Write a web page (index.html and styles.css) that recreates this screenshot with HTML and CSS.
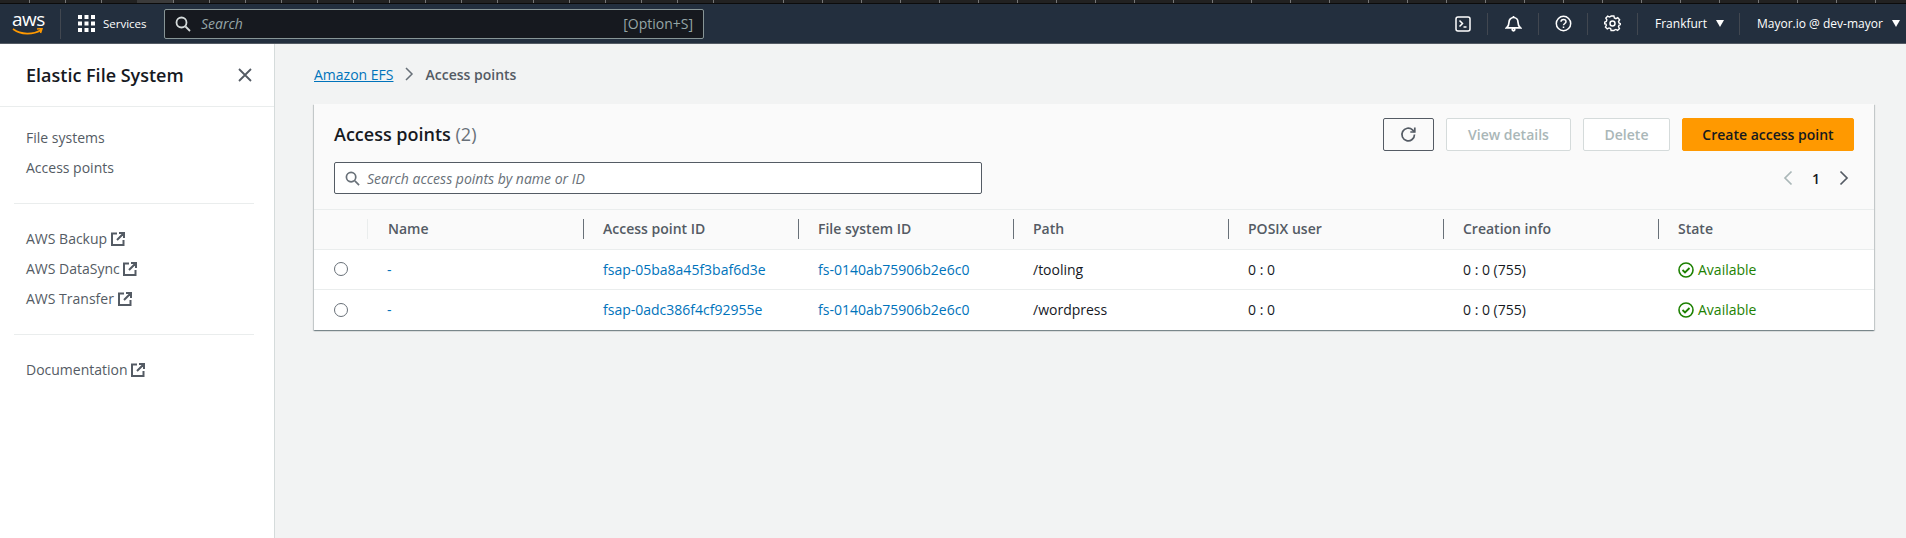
FILE: index.html
```html
<!DOCTYPE html>
<html lang="en">
<head>
    <meta charset="UTF-8">
    <meta name="viewport" content="width=device-width, initial-scale=1.0">
    <title>Access points | Amazon EFS</title>
    <link rel="stylesheet" href="styles.css">
</head>
<body>
    <div class="tabstrip">
        <span class="tabs tabs-left"></span>
        <span class="tab-active"></span>
        <span class="tabs tabs-mid"></span>
        <span class="tabs tabs-right"></span>
    </div>

    <header class="topnav">
        <div class="logo">
            <span class="logo-text">aws</span>
            <svg class="logo-smile" width="32" height="8" viewBox="0 0 32 8"><path d="M1 1c8 6 20 6 28 1M25 1l5-.5-1.500 4.500" fill="none" stroke="#f90" stroke-width="1.600"/></svg>
        </div>
        <span class="topnav-sep"></span>
        <div class="services">
            <svg width="17" height="17" viewBox="0 0 17 17" fill="#fff"><rect width="4" height="4"/><rect x="6.500" width="4" height="4"/><rect x="13" width="4" height="4"/><rect y="6.500" width="4" height="4"/><rect x="6.500" y="6.500" width="4" height="4"/><rect x="13" y="6.500" width="4" height="4"/><rect y="13" width="4" height="4"/><rect x="6.500" y="13" width="4" height="4"/><rect x="13" y="13" width="4" height="4"/></svg>
            <span>Services</span>
        </div>
        <div class="topsearch">
            <svg width="16" height="16" viewBox="0 0 16 16" fill="none" stroke="#d5dbdb" stroke-width="1.800"><circle cx="6.500" cy="6.500" r="5"/><path d="M10.500 10.500l4.500 4.500"/></svg>
            <span class="topsearch-text">Search</span>
            <span class="topsearch-key">[Option+S]</span>
        </div>
        <div class="topnav-right">
            <div class="topicon">
                <svg width="16" height="16" viewBox="0 0 16 16" fill="none" stroke="#fff" stroke-width="1.500"><rect x="1" y="1" width="14" height="14" rx="2"/><path d="M4.500 4.500L7.500 7.500 4.500 10.500M8.500 11h3"/></svg>
            </div>
            <div class="topicon topicon-bell">
                <svg width="17" height="17" viewBox="0 0 17 17" fill="none" stroke="#fff" stroke-width="1.700"><path d="M1.500 12.800c1.900-1.500 2.500-3.200 2.500-5.600 0-2.800 2-4.700 4.500-4.700s4.500 1.900 4.500 4.700c0 2.400.6 4.100 2.500 5.600z"/><path d="M8.500 1v1.500"/><circle cx="8.500" cy="14.500" r="1.300"/></svg>
            </div>
            <div class="topicon topicon-help">
                <svg width="17" height="17" viewBox="0 0 17 17" fill="none" stroke="#fff" stroke-width="1.500"><circle cx="8.500" cy="8.500" r="7.200"/><path d="M6 6.800c0-1.500 1.100-2.300 2.500-2.300S11 5.400 11 6.700c0 1.800-2.500 1.800-2.500 3.600"/><path d="M8.500 11.500v1.500"/></svg>
            </div>
            <div class="topicon">
                <svg width="17" height="17" viewBox="0 0 17 17" fill="none" stroke="#fff" stroke-width="1.500"><path d="M7 1h3l.5 2.100 1.700.8 1.900-1 2 2.300-1.200 1.700.5 1.600 1.800.9v.6l-1.800 1-.5 1.500 1 1.900-2 2-1.800-1-1.600.7L10 16.500H7l-.5-2-1.700-.7-1.800 1-2-2 1-1.900-.6-1.500L0 9.300V7.700l1.900-.8.6-1.700-1.100-1.800 2-2.200 1.800 1 1.400-.7z" transform="translate(.5 0) scale(.94)"/><circle cx="8.500" cy="8.500" r="2.500"/></svg>
            </div>
            <div class="topmenu topmenu-region">Frankfurt <span class="caret"></span></div>
            <div class="topmenu topmenu-user">Mayor.io @ dev-mayor <span class="caret"></span></div>
        </div>
    </header>

    <div class="layout">
        <aside class="sidebar">
            <div class="sidebar-head">
                <span class="sidebar-title">Elastic File System</span>
                <svg width="14" height="14" viewBox="0 0 14 14" fill="none" stroke="#545b64" stroke-width="1.800"><path d="M1 1l12 12M13 1L1 13"/></svg>
            </div>
            <nav class="sidebar-nav">
                <ul class="nav-group">
                    <li>File systems</li>
                    <li>Access points</li>
                </ul>
                <ul class="nav-group">
                    <li>AWS Backup <svg class="ext" width="14" height="14" viewBox="0 0 14 14"><use href="#ext-icon"/></svg></li>
                    <li>AWS DataSync <svg class="ext" width="14" height="14" viewBox="0 0 14 14"><use href="#ext-icon"/></svg></li>
                    <li>AWS Transfer <svg class="ext" width="14" height="14" viewBox="0 0 14 14"><use href="#ext-icon"/></svg></li>
                </ul>
                <ul class="nav-group">
                    <li>Documentation <svg class="ext" width="14" height="14" viewBox="0 0 14 14"><use href="#ext-icon"/></svg></li>
                </ul>
            </nav>
        </aside>

        <main class="content">
            <div class="breadcrumb">
                <a class="breadcrumb-link" href="#">Amazon EFS</a>
                <svg width="10" height="14" viewBox="0 0 10 14" fill="none" stroke="#687078" stroke-width="1.500"><path d="M2 1l6 6-6 6"/></svg>
                <span>Access points</span>
            </div>

            <section class="card">
                <div class="card-head">
                    <div class="card-top">
                        <h2 class="card-title">Access points <span class="count">(2)</span></h2>
                        <div class="actions">
                            <button class="btn btn-refresh">
                                <svg width="17" height="17" viewBox="0 0 17 17" fill="none" stroke="#545b64" stroke-width="1.700"><path d="M14.500 8.500a6.300 6.300 0 1 1-2-4.600L14.500 6"/><path d="M14.800 1.500V6h-4.500"/></svg>
                            </button>
                            <button class="btn btn-view" disabled>View details</button>
                            <button class="btn btn-delete" disabled>Delete</button>
                            <button class="btn btn-primary">Create access point</button>
                        </div>
                    </div>
                    <div class="card-filter">
                        <div class="filter-input">
                            <svg width="15" height="15" viewBox="0 0 16 16" fill="none" stroke="#687078" stroke-width="1.800"><circle cx="6.500" cy="6.500" r="5"/><path d="M10.500 10.500l4.500 4.500"/></svg>
                            <span>Search access points by name or ID</span>
                        </div>
                        <div class="pager">
                            <svg width="12" height="16" viewBox="0 0 12 16" fill="none" stroke="#aab7b8" stroke-width="1.700"><path d="M9.500 1.500L3 8l6.500 6.500"/></svg>
                            <span>1</span>
                            <svg width="12" height="16" viewBox="0 0 12 16" fill="none" stroke="#545b64" stroke-width="1.700"><path d="M2.500 1.500L9 8l-6.500 6.500"/></svg>
                        </div>
                    </div>
                </div>

                <table class="grid">
                    <colgroup>
                        <col class="col-radio">
                        <col class="col-name">
                        <col class="col-id">
                        <col class="col-id">
                        <col class="col-id">
                        <col class="col-id">
                        <col class="col-id">
                        <col>
                    </colgroup>
                    <thead>
                        <tr>
                            <th></th>
                            <th><div class="th-inner th-first">Name</div></th>
                            <th><div class="th-inner">Access point ID</div></th>
                            <th><div class="th-inner">File system ID</div></th>
                            <th><div class="th-inner">Path</div></th>
                            <th><div class="th-inner">POSIX user</div></th>
                            <th><div class="th-inner">Creation info</div></th>
                            <th><div class="th-inner">State</div></th>
                        </tr>
                    </thead>
                    <tbody>
                        <tr>
                            <td class="cell-radio"><span class="radio"></span></td>
                            <td><a href="#">-</a></td>
                            <td><a href="#">fsap-05ba8a45f3baf6d3e</a></td>
                            <td><a href="#">fs-0140ab75906b2e6c0</a></td>
                            <td>/tooling</td>
                            <td>0 : 0</td>
                            <td>0 : 0 (755)</td>
                            <td class="status"><svg width="16" height="16" viewBox="0 0 16 16"><use href="#ok-icon"/></svg>Available</td>
                        </tr>
                        <tr>
                            <td class="cell-radio"><span class="radio"></span></td>
                            <td><a href="#">-</a></td>
                            <td><a href="#">fsap-0adc386f4cf92955e</a></td>
                            <td><a href="#">fs-0140ab75906b2e6c0</a></td>
                            <td>/wordpress</td>
                            <td>0 : 0</td>
                            <td>0 : 0 (755)</td>
                            <td class="status"><svg width="16" height="16" viewBox="0 0 16 16"><use href="#ok-icon"/></svg>Available</td>
                        </tr>
                    </tbody>
                </table>
            </section>
        </main>
    </div>

    <!-- shared icons -->
    <svg class="icon-defs" width="0" height="0">
        <symbol id="ext-icon" viewBox="0 0 14 14">
            <path d="M6 1.500H1v11.500h11.500V8M8 1h5v5M13 1L6 8" fill="none" stroke="#545b64" stroke-width="2"/>
        </symbol>
        <symbol id="ok-icon" viewBox="0 0 16 16">
            <circle cx="8" cy="8" r="7" fill="none" stroke="#1d8102" stroke-width="1.600"/>
            <path d="M4.500 8l2.500 2.500 4.500-4.500" fill="none" stroke="#1d8102" stroke-width="1.800"/>
        </symbol>
    </svg>
</body>
</html>
```

FILE: styles.css
```css
* {
    box-sizing: border-box;
}

html, body {
    height: 100%;
}

body {
    margin: 0;
    display: flex;
    flex-direction: column;
    overflow: hidden;
    background-color: #f2f3f3;
    color: #16191f;
    font-family: "Open Sans", "Noto Sans", sans-serif;
    font-size: 14px;
}

a {
    color: #0073bb;
    text-decoration: none;
}

ul {
    margin: 0;
    padding: 0;
    list-style: none;
}

.icon-defs {
    position: absolute;
}

/* browser tab strip above the console */
.tabstrip {
    flex: none;
    height: 4px;
    display: flex;
    background-color: #222;
    border-bottom: 1px solid #0c0c0c;
}

.tabs {
    display: block;
    height: 100%;
    background-image: linear-gradient(90deg, #777 1px, transparent 1px);
    background-size: 36px 100%;
}

.tabs-left {
    width: 137px;
    background-position: 29px 0;
}

.tab-active {
    width: 36px;
    background-color: #3b3b3b;
}

.tabs-mid {
    width: 573px;
}

.tabs-right {
    flex: 1;
    background-size: 39px 100%;
    background-position: 37px 0;
}

.topnav {
    flex: none;
    height: 40px;
    display: flex;
    align-items: center;
    background-color: #232f3e;
    border-bottom: 1px solid #545b64;
    color: #fff;
}

.logo {
    width: 60px;
    padding-left: 12px;
    height: 28px;
    display: flex;
    flex-direction: column;
    line-height: 18px;
}

.logo-text {
    font-family: "Open Sans", sans-serif;
    font-size: 19px;
    letter-spacing: -0.5px;
    line-height: 19px;
}

.logo-smile {
    margin-top: -1px;
}

.topnav-sep {
    width: 1px;
    height: 30px;
    background-color: #414750;
}

.services {
    display: flex;
    align-items: center;
    gap: 8px;
    width: 103px;
    padding-left: 17px;
    font-size: 11.500px;
    font-weight: 500;
}

.topsearch {
    width: 540px;
    height: 30px;
    display: flex;
    align-items: center;
    padding: 0 10px;
    gap: 10px;
    background-color: #16191f;
    border: 1px solid #879596;
    border-radius: 2px;
    color: #95a5a6;
    font-size: 14px;
}

.topsearch-text {
    flex: 1;
    font-style: italic;
}

.topnav-right {
    margin-left: auto;
    display: flex;
    align-items: center;
    height: 100%;
}

.topicon {
    width: 50px;
    height: 22px;
    display: flex;
    align-items: center;
    justify-content: center;
    border-right: 1px solid #414750;
}

.topicon-bell {
    width: 51px;
}

.topicon-help {
    width: 49px;
}

.topmenu {
    display: flex;
    align-items: center;
    gap: 9px;
    height: 22px;
    font-size: 12px;
    font-weight: 500;
}

.topmenu-region {
    width: 102px;
    padding-left: 17px;
    border-right: 1px solid #414750;
}

.topmenu-user {
    width: 166px;
    padding-left: 17px;
}

.caret {
    width: 0;
    height: 0;
    border-left: 4.500px solid transparent;
    border-right: 4.500px solid transparent;
    border-top: 7px solid #fff;
}

.layout {
    flex: 1;
    display: flex;
    min-height: 0;
}

.sidebar {
    flex: none;
    width: 275px;
    background-color: #fff;
    border-right: 1px solid #d5dbdb;
}

.sidebar-head {
    height: 63px;
    display: flex;
    align-items: center;
    justify-content: space-between;
    padding: 0 22px 0 26px;
    border-bottom: 1px solid #eaeded;
}

.sidebar-title {
    font-size: 18px;
    font-weight: 600;
}

.sidebar-nav {
    padding: 16px 20px 0 14px;
}

.nav-group {
    padding: 0 0 20px 12px;
    margin-bottom: 20px;
    border-bottom: 1px solid #eaeded;
    color: #545b64;
}

.nav-group:last-child {
    border-bottom: 0;
}

.nav-group li {
    height: 30px;
    line-height: 30px;
    white-space: nowrap;
}

.ext {
    vertical-align: -2px;
}

.content {
    flex: 1;
    min-width: 0;
    padding: 0 32px 0 39px;
}

.breadcrumb {
    height: 60px;
    display: flex;
    align-items: center;
    gap: 11px;
    color: #545b64;
    font-weight: 600;
}

.breadcrumb-link {
    font-weight: 400;
    text-decoration: underline;
}

.card {
    background-color: #fff;
    box-shadow: 0 1px 1px 0 rgba(0, 28, 36, 0.3), 1px 1px 1px 0 rgba(0, 28, 36, 0.15), -1px 1px 1px 0 rgba(0, 28, 36, 0.15);
}

.card-head {
    height: 106px;
    padding: 14px 20px 0;
    background-color: #fafafa;
    border-bottom: 1px solid #eaeded;
}

.card-top {
    display: flex;
    align-items: center;
    justify-content: space-between;
    height: 33px;
}

.card-title {
    margin: -2px 0 0;
    font-size: 18px;
    font-weight: 600;
}

.count {
    font-weight: 400;
    color: #687078;
}

.actions {
    display: flex;
    gap: 12px;
}

.btn {
    height: 33px;
    padding: 0;
    background-color: #fff;
    border: 1px solid #545b64;
    border-radius: 2px;
    font-family: inherit;
    font-size: 14px;
    font-weight: 600;
    display: flex;
    align-items: center;
    justify-content: center;
}

.btn-refresh {
    width: 51px;
    background-color: #fafafa;
}

.btn[disabled] {
    color: #aab7b8;
    background-color: #fff;
    border-color: #d5dbdb;
}

.btn-view {
    width: 125px;
}

.btn-delete {
    width: 87px;
}

.btn-primary {
    width: 172px;
    background-color: #f90;
    border-color: #f90;
    color: #16191f;
}

.card-filter {
    display: flex;
    align-items: center;
    justify-content: space-between;
    margin-top: 11px;
}

.filter-input {
    width: 648px;
    height: 32px;
    display: flex;
    align-items: center;
    gap: 7px;
    padding: 0 10px;
    background-color: #fff;
    border: 1px solid #545b64;
    border-radius: 2px;
    color: #687078;
    font-style: italic;
}

.pager {
    display: flex;
    align-items: center;
    gap: 18px;
    padding-right: 4px;
    font-weight: 600;
}

.grid {
    width: 100%;
    border-collapse: collapse;
    table-layout: fixed;
}

.col-radio {
    width: 53px;
}

.col-name {
    width: 216px;
}

.col-id {
    width: 215px;
}

.grid th {
    height: 39px;
    padding: 0;
    text-align: left;
    background-color: #fafafa;
    border-bottom: 1px solid #eaeded;
    color: #545b64;
    font-weight: 600;
}

.th-inner {
    height: 20px;
    line-height: 20px;
    padding-left: 19px;
    border-left: 1px solid #687078;
}

.th-first {
    border-left-color: #eaeded;
    padding-left: 20px;
}

.grid td {
    height: 40px;
    padding: 0 0 0 20px;
    border-bottom: 1px solid #eaeded;
}

.grid tbody tr:last-child td {
    height: 41px;
    border-bottom: 0;
}

.radio {
    display: block;
    width: 14px;
    height: 14px;
    background-color: #fff;
    border: 1px solid #687078;
    border-radius: 50%;
}

.status {
    color: #1d8102;
}

.status svg {
    vertical-align: -3px;
    margin-right: 4px;
}
```
